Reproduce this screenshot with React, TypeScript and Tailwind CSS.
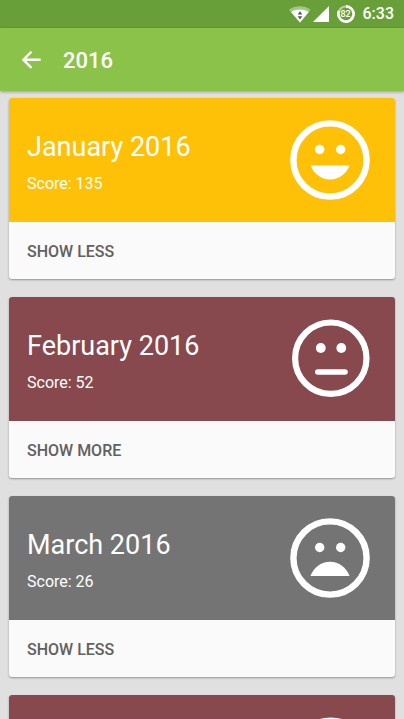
import { useState } from "react";

type Mood = "happy" | "neutral" | "sad";

type Month = {
  title: string;
  score: number;
  mood: Mood;
  color: string;
  expanded: boolean;
};

const months: Month[] = [
  { title: "January 2016", score: 135, mood: "happy", color: "bg-[#ffc107]", expanded: true },
  { title: "February 2016", score: 52, mood: "neutral", color: "bg-[#87494e]", expanded: false },
  { title: "March 2016", score: 26, mood: "sad", color: "bg-[#747474]", expanded: true },
  { title: "April 2016", score: 48, mood: "neutral", color: "bg-[#87494e]", expanded: false },
];

function Face({ mood }: { mood: Mood }) {
  if (mood === "neutral") {
    return (
      <svg viewBox="0 0 80 80" className="size-20 shrink-0" aria-hidden="true">
        <circle cx="40.8" cy="39.2" r="35.7" fill="none" stroke="white" strokeWidth="6.2" />
        <circle cx="30.8" cy="29" r="4.9" fill="white" />
        <circle cx="51.3" cy="29" r="4.9" fill="white" />
        <path d="M27.8 53H55" stroke="white" strokeWidth="5.6" strokeLinecap="round" />
      </svg>
    );
  }
  return (
    <svg viewBox="0 0 80 80" className="size-20 shrink-0" aria-hidden="true">
      <circle cx="40" cy="40" r="36.6" fill="none" stroke="white" strokeWidth="6.4" />
      <circle cx="29.7" cy="29.5" r="4.7" fill="white" />
      <circle cx="50.7" cy="29.5" r="4.7" fill="white" />
      {mood === "happy" ? (
        <path d="M20.7 45.6H59.4C56.4 53.9 49 59.6 40 59.6S23.7 53.9 20.7 45.6Z" fill="white" />
      ) : (
        <path d="M20.4 58H59.6C56.3 49.6 49 43.8 40 43.8S23.7 49.6 20.4 58Z" fill="white" />
      )}
    </svg>
  );
}

function StatusBar() {
  return (
    <div className="flex h-7 shrink-0 items-center justify-end bg-[#689f38] pr-[10px] text-white">
      <svg viewBox="0 0 22 18" className="mr-0.5 h-[18px] w-[22px]" aria-label="Wi-Fi">
        <path d="M0 4.8C6 0.2 15.500 0.2 21.500 4.8L11 17.500Z" fill="white" fillOpacity="0.4" />
        <path d="M2 7C7 3.700 14.500 3.700 19.800 7L11 17.500Z" fill="white" />
        <path d="M11 6.200L13.300 9.600H8.700ZM8.700 11.200H13.300L11 14.600Z" fill="#555555" />
      </svg>
      <svg viewBox="0 0 16 16" className="mr-2 size-4" aria-label="Signal">
        <path d="M16 0V16H0Z" fill="white" />
      </svg>
      <div className="relative mr-2 flex size-[18px] items-center justify-center">
        <svg viewBox="0 0 18 18" className="absolute inset-0 size-full" aria-hidden="true">
          <circle cx="9" cy="9" r="7.600" fill="none" stroke="white" strokeOpacity="0.5" strokeWidth="2.400" />
          <path d="M9 1.400A7.600 7.600 0 1 1 2 6" fill="none" stroke="white" strokeWidth="2.600" />
        </svg>
        <span className="text-[9px] leading-none font-medium">82</span>
      </div>
      <span className="text-base leading-7 font-medium">6:33</span>
    </div>
  );
}

function MonthCard({ month }: { month: Month }) {
  const [expanded, setExpanded] = useState(month.expanded);
  return (
    <article className="shrink-0 overflow-hidden rounded-[3px] bg-[#fafafa] shadow-[0_1px_2px_rgba(0,0,0,0.35)]">
      <div className={`flex h-31 items-center justify-between pr-[25px] pl-[18px] text-white ${month.color}`}>
        <div className="flex flex-col gap-[11px] pt-[5px]">
          <h2 className="text-[27px] leading-8">{month.title}</h2>
          <p className="text-base leading-5">Score: {month.score}</p>
        </div>
        <Face mood={month.mood} />
      </div>
      <button
        type="button"
        aria-expanded={expanded}
        onClick={() => setExpanded(!expanded)}
        className="block h-[57px] w-full px-[18px] pt-0.5 text-left text-base font-medium text-[#616161]"
      >
        {expanded ? "SHOW LESS" : "SHOW MORE"}
      </button>
    </article>
  );
}

export default function App() {
  return (
    <div className="flex h-screen flex-col bg-[#e0e0e0] font-[Roboto,sans-serif]">
      <StatusBar />
      <header className="z-10 flex h-[63px] shrink-0 items-center gap-5 bg-[#8bc34a] px-5 pt-0.5 text-white shadow-[0_1px_3px_rgba(0,0,0,0.3)]">
        <button type="button" aria-label="Back">
          <svg viewBox="0 0 24 24" className="size-[23px]" aria-hidden="true">
            <path d="M21.500 11.200H4.500M12 2.700L3.500 11.200L12 19.700" fill="none" stroke="white" strokeWidth="2.500" />
          </svg>
        </button>
        <h1 className="text-[22px] leading-7 font-medium">2016</h1>
      </header>
      <main className="flex min-h-0 flex-1 flex-col gap-[18px] overflow-y-auto px-[9px] pt-[7px] [scrollbar-width:none]">
        {months.map((month) => (
          <MonthCard key={month.title} month={month} />
        ))}
      </main>
    </div>
  );
}
